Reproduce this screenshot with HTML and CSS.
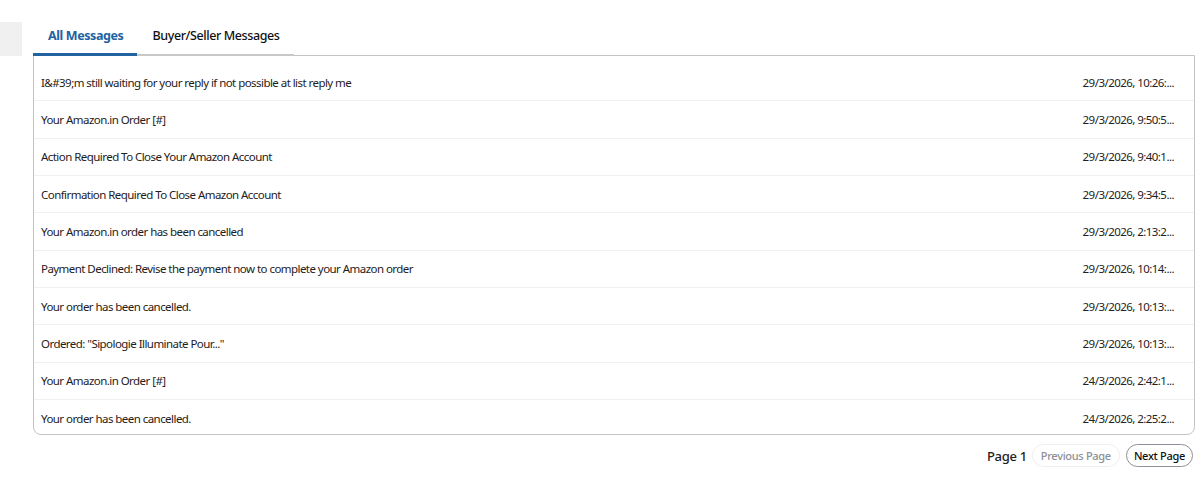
FILE: index.html
```html
<!DOCTYPE html>
<html lang="en">
<head>
    <meta charset="UTF-8">
    <meta name="viewport" content="width=device-width, initial-scale=1.0">
    <title>Messages</title>
    <link rel="stylesheet" href="styles.css">
</head>
<body>
    <div class="layout">
        <div class="side-stub"></div>

        <main class="inbox">
            <nav class="tabs">
                <button class="tab active">All Messages</button>
                <button class="tab">Buyer/Seller Messages</button>
            </nav>

            <div class="panel">
                <ul class="message-list">
                    <li class="message"><span class="subject">I&amp;#39;m still waiting for your reply if not possible at list reply me</span><span class="date">29/3/2026, 10:26:...</span></li>
                    <li class="message"><span class="subject">Your Amazon.in Order [#]</span><span class="date">29/3/2026, 9:50:5...</span></li>
                    <li class="message"><span class="subject">Action Required To Close Your Amazon Account</span><span class="date">29/3/2026, 9:40:1...</span></li>
                    <li class="message"><span class="subject">Confirmation Required To Close Amazon Account</span><span class="date">29/3/2026, 9:34:5...</span></li>
                    <li class="message"><span class="subject">Your Amazon.in order has been cancelled</span><span class="date">29/3/2026, 2:13:2...</span></li>
                    <li class="message"><span class="subject">Payment Declined: Revise the payment now to complete your Amazon order</span><span class="date">29/3/2026, 10:14:...</span></li>
                    <li class="message"><span class="subject">Your order has been cancelled.</span><span class="date">29/3/2026, 10:13:...</span></li>
                    <li class="message"><span class="subject">Ordered: "Sipologie Illuminate Pour..."</span><span class="date">29/3/2026, 10:13:...</span></li>
                    <li class="message"><span class="subject">Your Amazon.in Order [#]</span><span class="date">24/3/2026, 2:42:1...</span></li>
                    <li class="message"><span class="subject">Your order has been cancelled.</span><span class="date">24/3/2026, 2:25:2...</span></li>
                </ul>
            </div>

            <div class="pager">
                <span class="page-label">Page 1</span>
                <button class="pager-btn" disabled>Previous Page</button>
                <button class="pager-btn">Next Page</button>
            </div>
        </main>
    </div>
</body>
</html>
```

FILE: styles.css
```css
body {
    margin: 0;
    font-family: "Noto Sans", "Open Sans", sans-serif;
    color: #1f2121;
    background: #ffffff;
}

.layout {
    display: flex;
    align-items: flex-start;
}

.side-stub {
    width: 22px;
    height: 34px;
    margin-top: 22px;
    background-color: #f0f0f0;
    flex-shrink: 0;
}

.inbox {
    flex: 1;
    margin-left: 11px;
    margin-right: 5px;
}

/* tabs */

.tabs {
    display: flex;
    margin-top: 18px;
}

.tab {
    font-family: inherit;
    font-size: 12.5px;
    font-weight: 500;
    letter-spacing: -0.4px;
    color: #0f1111;
    background: none;
    border: none;
    border-bottom: 2px solid #c8c8c8;
    padding: 9px 15px 10px;
    margin: 0;
    cursor: pointer;
}

.tab.active {
    color: #2162a1;
    font-weight: 700;
    border-bottom: 3px solid #2162a1;
    padding: 9px 14px 9px 15px;
}

/* message list */

.panel {
    height: 370px;
    border: 1px solid #c4c4c4;
    border-radius: 0 0 8px 8px;
    margin-top: -1px;
    padding-top: 8px;
    overflow: hidden;
}

.message-list {
    list-style: none;
    margin: 0;
    padding: 0;
}

.message {
    display: flex;
    justify-content: space-between;
    align-items: center;
    height: 37.33px;
    box-sizing: border-box;
    padding: 0 20px 0 7px;
    font-size: 11.5px;
    letter-spacing: -0.55px;
    border-bottom: 1px solid #f0f0f0;
}

.date {
    white-space: nowrap;
}

/* pagination */

.pager {
    display: flex;
    justify-content: flex-end;
    align-items: center;
    gap: 5px;
    margin-top: 9px;
    margin-right: 2px;
}

.page-label {
    font-size: 13px;
    font-weight: 500;
    letter-spacing: -0.3px;
}

.pager-btn {
    font-family: inherit;
    font-size: 11px;
    font-weight: 500;
    letter-spacing: -0.3px;
    color: #0f1111;
    background: #ffffff;
    border: 1px solid #8d9096;
    border-radius: 12px;
    height: 23px;
    padding: 0 8px;
    cursor: pointer;
}

.pager-btn:disabled {
    color: #8d9096;
    border-color: #eeeeee;
    cursor: default;
}

.pager-btn + .pager-btn {
    margin-left: 1px;
    padding: 0 7px;
}
```
